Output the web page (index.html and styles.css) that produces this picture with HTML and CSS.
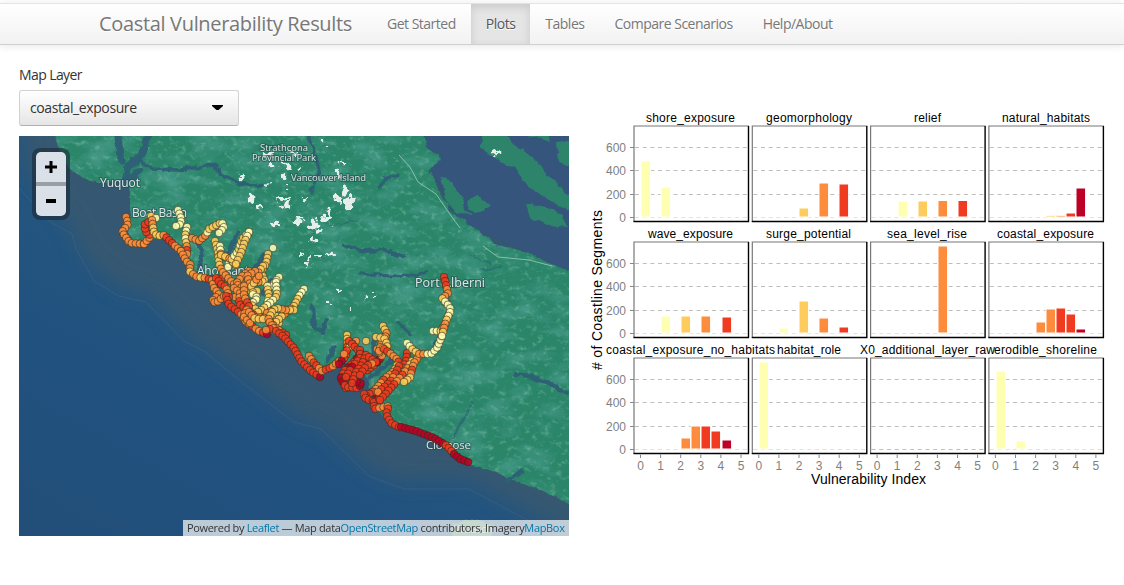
FILE: index.html
```html
<!DOCTYPE html>
<html lang="en">
<head>
<meta charset="utf-8">
<title>Coastal Vulnerability Results</title>
<link rel="stylesheet" href="styles.css">
</head>
<body>
<header class="navbar">
  <span class="brand">Coastal Vulnerability Results</span>
  <nav class="tabs">
    <a class="tab">Get Started</a>
    <a class="tab active">Plots</a>
    <a class="tab">Tables</a>
    <a class="tab">Compare Scenarios</a>
    <a class="tab">Help/About</a>
  </nav>
</header>
<main class="content">
  <section class="map-column">
    <label class="label">Map Layer</label>
    <div class="select"><span class="value">coastal_exposure</span>
      <svg width="12" height="6" viewBox="0 0 12 6"><path d="M0 0H11V1L6.500 5H4.500L0 1Z" fill="#000"/></svg>
    </div>
    <div class="map">
      <svg class="canvas" width="550" height="400" viewBox="0 0 550 400">
        <defs>
          <linearGradient id="sea" x1="0" y1="1" x2=".72" y2=".08">
            <stop offset="0" stop-color="#224e78"/><stop offset=".3" stop-color="#21517f"/><stop offset=".55" stop-color="#23557f"/><stop offset="1" stop-color="#2b577c"/>
          </linearGradient>
          <filter id="soft" x="-20%" y="-20%" width="140%" height="140%"><feGaussianBlur stdDeviation="10"/></filter>
          <filter id="edge" x="-5%" y="-5%" width="110%" height="110%"><feTurbulence type="fractalNoise" baseFrequency=".12" numOctaves="3" seed="4"/><feDisplacementMap in="SourceGraphic" scale="6" xChannelSelector="R" yChannelSelector="G"/><feGaussianBlur stdDeviation=".6"/></filter>
          <filter id="snowedge" x="-20%" y="-20%" width="140%" height="140%"><feTurbulence type="fractalNoise" baseFrequency=".16" numOctaves="2" seed="9"/><feDisplacementMap in="SourceGraphic" scale="13" xChannelSelector="R" yChannelSelector="G"/><feGaussianBlur stdDeviation=".5"/></filter>
          <filter id="dark" x="0" y="0" width="100%" height="100%"><feTurbulence type="fractalNoise" baseFrequency=".03 .06" numOctaves="5" seed="12"/><feColorMatrix values="0 0 0 0 .12  0 0 0 0 .42  0 0 0 0 .38  2.2 0 0 0 -.95"/></filter>
          <filter id="light" x="0" y="0" width="100%" height="100%"><feTurbulence type="fractalNoise" baseFrequency=".16 .2" numOctaves="3" seed="31"/><feColorMatrix values="0 0 0 0 .33  0 0 0 0 .66  0 0 0 0 .48  0 2.4 0 0 -1.3"/><feGaussianBlur stdDeviation=".4"/></filter>
          <clipPath id="landclip"><use href="#land"/></clipPath>
        </defs>
        <rect width="550" height="400" fill="url(#sea)"/>
        <path d="M0 -20L10 35 50 88 65 122 100 152 130 158 165 197 230 242 275 280 305 292 350 332 380 345 450 345 510 377 580 412V-20Z" fill="#37586f" opacity=".9" filter="url(#soft)"/>
        <path d="M390 -10H560V140L440 85Z" fill="#35557d"/>
        <path d="M0 52L30 85 53 98 57 113 75 145 100 160 127 166 165 205 185 215 225 248 275 286 302 293 350 340 385 353 450 353 510 385" fill="none" stroke="#5a7190" stroke-opacity=".3"/>
        <g filter="url(#edge)">
          <path id="land" d="M33 -8L40 14 50 32 65 43 80 47 100 43 111 50 111 80 106 92 115 105 130 105 146 101 162 117 170 136 200 148 201 160 220 174 245 197 268 200 280 222 301 238 318 225 345 237 355 262 370 288 400 298 430 311 450 328 480 337 495 345 520 353 560 373V138L532 128 508 117 475 108 462 97 442 83 431 75 422 58 411 33 422 23 408 10 402 -8Z" fill="#2b8569"/>
          <g fill="#2d846b">
            <path d="M422 40L433 47 442 60 446 74 454 79 440 78 428 69Z"/>
            <path d="M448 62L459 60 473 70 457 78 449 73Z"/>
            <path d="M464 -6H483L495 8 513 21 530 40 555 65V77L530 64 509 50 495 31 482 27 462 12Z"/>
            <path d="M508 69L530 71 543 80 549 91 530 89 513 84Z"/>
            <path d="M500 -4H528L531 7 520 3ZM538 7L556 3V32L540 26Z"/>
            <path d="M432 388L455 383 477 389 470 402H434Z" fill="#467f60"/>
          </g>
        </g>
        <g clip-path="url(#landclip)">
          <rect width="550" height="400" filter="url(#dark)" opacity=".55"/>
          <rect width="550" height="400" filter="url(#light)" opacity=".45"/>
        </g>
        <g filter="url(#edge)" fill="none" stroke="#2f6076" stroke-linecap="round" stroke-linejoin="round">
          <path d="M106 48L109 30 122 20 132 -4M103 25L98 -4" stroke-width="7"/>
          <path d="M122 26L135 33 160 34 195 29 204 39 218 47 242 50" stroke-width="3.500"/>
          <path d="M112 43L120 35" stroke-width="7"/>
          <path d="M288 -3L297 18 300 35 292 56" stroke-width="3"/>
          <path d="M361 51L365 43 380 38" stroke-width="3"/>
          <path d="M325 110L342 115 366 114 384 121" stroke-width="4"/>
          <path d="M340 137L370 140 394 139 407 136" stroke-width="3"/>
          <path d="M293 170L295 192 304 196 308 184M380 187L391 198" stroke-width="4"/>
          <path d="M512 241L530 247 548 257M497 238L514 241" stroke-width="4"/>
          <path d="M454 267L444 283 434 302" stroke-width="2" opacity=".7"/>
          <path d="M490 344L502 336" stroke-width="5"/>
          <path d="M180 137L183 116 179 107M209 118L219 97M232 138L244 120M244 156L253 145M315 212L309 224M356 224L354 205M350 242L377 222M426 143L430 170 424 195 413 216" stroke-width="5"/>
          <path d="M450 119L473 128M463 134L482 131M316 89L339 84" stroke-width="1.500" opacity=".6"/>
        </g>
        <path d="M380 19L391 31 399 46 417 58 430 77 441 92M464 110L479 121 510 124 533 130" fill="none" stroke="#a5d2bd" stroke-width="1" stroke-opacity=".75"/>
        <g id="snow" fill="#e5eee9" filter="url(#snowedge)"></g>
        <g class="places">
          <text x="81" y="51" font-size="12" textLength="40">Yuquot</text>
          <text x="113" y="81" font-size="12" textLength="55">Boat Basin</text>
          <text x="178" y="139" font-size="12" textLength="52">Ahousant</text>
          <text x="396" y="151" font-size="12.500" textLength="70">Port Alberni</text>
          <text x="407" y="313" font-size="11.500" textLength="45">Clo-oose</text>
          <text x="241" y="15" font-size="9.500" textLength="48">Strathcona</text>
          <text x="233" y="24.500" font-size="9.500" textLength="64">Provincial Park</text>
          <text x="272" y="45" font-size="9.500" textLength="75">Vancouver Island</text>
          <text x="435" y="397" font-size="11.500" textLength="39" opacity=".7">Waatch</text>
        </g>
        <g id="segments"></g>
      </svg>
      <div class="zoom"><a class="zoom-button"><svg width="12" height="12"><path d="M4.500 0H7.500V4.500H12V7.500H7.500V12H4.500V7.500H0V4.500H4.500Z"/></svg></a><a class="zoom-button"><svg width="12" height="12"><path d="M1 4H11V8H1Z"/></svg></a></div>
      <div class="attribution">Powered by <a>Leaflet</a> — Map data<a>OpenStreetMap</a> contributors, Imagery<a>MapBox</a></div>
    </div>
  </section>
  <svg id="plots" class="plots" width="530" height="390" viewBox="0 0 530 390"></svg>
</main>
<script src="app.js"></script>
</body>
</html>
```
FILE: styles.css
```css
body {
  margin: 0;
  background: #fff;
  color: #333;
  font-family: "Open Sans", "Noto Sans", sans-serif;
  font-size: 14px;
}
.navbar {
  display: flex;
  box-sizing: border-box;
  height: 42px;
  margin-top: 3px;
  padding-left: 99px;
  border-top: 1px solid #e4e4e4;
  border-bottom: 1px solid #d0d0d0;
  background: linear-gradient(#fff, #f2f2f2);
  box-shadow: 0 1px 8px rgba(0, 0, 0, .1);
  color: #777;
  line-height: 40px;
  text-shadow: 0 1px 0 #fff;
  white-space: nowrap;
}
.brand { width: 273px; font-size: 20px; letter-spacing: -.33px; }
.tabs { display: flex; letter-spacing: -.5px; }
.tab { padding: 0 15px; }
.active {
  background: #e5e5e5;
  box-shadow: inset 0 3px 8px rgba(0, 0, 0, .125);
  color: #555;
}
.content { display: flex; padding: 20px 0 0 19px; }
.map-column { width: 550px; }
.label { display: block; height: 25px; line-height: 20px; letter-spacing: -.6px; }
.select {
  display: flex;
  align-items: center;
  justify-content: space-between;
  box-sizing: border-box;
  width: 220px;
  height: 36px;
  padding: 0 14px 0 10px;
  border: 1px solid #d2d2d2;
  border-bottom-color: #b0b0b0;
  border-radius: 3px;
  background: linear-gradient(#fff, #e6e6e6);
  letter-spacing: -.4px;
}
.value { padding-bottom: 2px; }
.map { position: relative; height: 400px; margin-top: 10px; overflow: hidden; }
.canvas { display: block; }
.places text {
  fill: #dce9e6;
  font-family: "Open Sans", sans-serif;
  paint-order: stroke;
  stroke: rgba(40, 75, 80, .6);
  stroke-width: 2px;
}
.zoom {
  position: absolute;
  left: 13px;
  top: 12px;
  display: grid;
  gap: 4px;
  padding: 4px;
  border-radius: 8px;
  background: linear-gradient(#9a9fa5, #9a9fa5) 4px 30px / 30px 12px no-repeat, rgba(24, 40, 53, .58);
}
.zoom-button {
  display: grid;
  place-items: center;
  width: 30px;
  height: 30px;
  background: #d9e0e7;
}
.zoom-button:first-child { border-radius: 5px 5px 0 0; }
.zoom-button:last-child { border-radius: 0 0 5px 5px; }
.attribution {
  position: absolute;
  right: 0;
  bottom: 0;
  box-sizing: border-box;
  width: 386px;
  height: 16px;
  padding: 0 4px;
  background: rgba(255, 255, 255, .7);
  font-size: 11px;
  line-height: 16px;
  letter-spacing: -.33px;
  white-space: nowrap;
}
.attribution a { color: #0078a8; }
.plots {
  margin: 40px 0 0 16px;
  overflow: visible;
  font-family: "Liberation Sans", Arial, sans-serif;
}
.strip { font-size: 12px; fill: #000; }
.tick { font-size: 12px; fill: #7f7f7f; }
.axis-title { font-size: 14px; fill: #000; }
```
FILE: app.js
```js
const NS = 'http://www.w3.org/2000/svg';
function add(parent, tag, attrs, text) {
  const el = document.createElementNS(NS, tag);
  for (const key in attrs) el.setAttribute(key, attrs[key]);
  if (text !== undefined) el.textContent = text;
  parent.appendChild(el);
  return el;
}
const palette = { Y: '#ffffb2', G: '#fecc5c', O: '#fd8d3c', R: '#f03b20', D: '#bd0026' };

// Coastline segments: exposure classes spread along each path.
const chains = [
  ['Y', '254,112 254,112'],
  ['YYYY', '159,74 162,82 162,88 157,90'],
  ['OOO', '107,81 109,88 103,96 111,107 125,108'],
  ['OORRRO', '125,108 132,100 126,95 126,88 133,84'],
  ['GY', '132,80 137,82'],
  ['OGGGORROOO', '133,84 135,97 139,100 145,99 149,103 154,108 162,115'],
  ['YGYGORO', '168,91 166,100 168,112 168,118'],
  ['OOOYGGGYYY', '173,102 180,105 187,99 190,93 203,86 205,92 200,97'],
  ['OOOOGOGORRR', '162,115 167,125 172,129 170,135 178,141 187,142 193,144 202,143'],
  ['GGGGOOOO', '196,105 199,117 200,128 203,135 210,143 218,151'],
  ['YOGY', '201,110 202,119 211,123 209,131'],
  ['GOGG', '202,119 210,122 217,129'],
  ['GGYGYGYY', '217,129 212,124 219,115 223,103 230,96'],
  ['YGGGG', '230,96 226,105 222,117 217,128'],
  ['GGGGGOGGO', '249,118 247,128 242,136 246,145 233,147 225,158'],
  ['GOGOGO', '244,130 237,140 230,146 221,151'],
  ['OOOGO', '230,135 223,140 217,148 226,153 216,161'],
  ['OOGO', '236,135 228,140 232,151 240,140'],
  ['YYYGGYGOGG', '260,141 253,150 248,150 250,160 247,173 257,180 260,187'],
  ['YGYG', '257,146 258,160 252,166 242,174'],
  ['YYGGOOGG', '285,153 280,160 275,170 263,180 257,186'],
  ['GOGO', '275,174 266,174 258,172 248,177'],
  ['GYYYGG', '238,155 232,157 239,162 232,168 239,176'],
  ['OOOOO', '193,144 195,152 200,158 193,165 197,167 205,160'],
  ['RROR', '197,142 202,148 207,151 210,161'],
  ['RRRRROOOROORD', '207,160 210,169 217,174 222,178 227,186 240,195 248,198'],
  ['OORRROOOOR', '215,152 221,157 220,168 229,174 237,181 247,182 257,192 267,199'],
  ['OOROOO', '225,150 225,160 230,170 224,180 231,187'],
  ['OGGG', '230,176 235,182 240,183 244,183'],
  ['GOOORO', '253,176 249,184 255,192 247,194'],
  ['RRRRRRRRRD', '257,195 265,201 275,212 282,225 292,235 301,241'],
  ['OROROO', '290,220 295,227 303,235 313,231 320,225'],
  ['GORRRDD', '328,199 328,211 327,220 320,228'],
  ['OGRO', '337,205 332,209 325,218'],
  ['RRRDDRRDRRRRR', '330,205 342,217 335,226 325,235 322,243 327,252'],
  ['DRRDD', '322,242 327,251 338,252 343,248 334,244'],
  ['RRRRRRDDOOO', '331,240 337,233 347,235 357,228 363,220 358,213'],
  ['RRRDRR', '341,214 341,222 333,231 327,241'],
  ['RRRR', '347,219 343,228 337,236 333,247'],
  ['RRORRR', '350,221 357,226 347,230 341,239'],
  ['GOGOO', '364,190 368,198 363,206 360,215'],
  ['GGG', '357,201 365,202 369,210 364,212'],
  ['G', '347,205 347,205'],
  ['ROORGOOROORR', '365,213 372,218 380,225 375,235 365,243 355,255 347,260'],
  ['RRRDRDDR', '345,258 347,263 355,265 360,260'],
  ['RROORRRRRR', '355,266 355,273 370,270 367,278 372,287 380,291'],
  ['RRRORRRRROR', '388,217 387,225 381,236 375,247 365,255 360,263'],
  ['RRORRRO', '380,230 375,240 370,247 359,256'],
  ['GORORRRR', '393,225 388,233 378,245 370,254 361,264'],
  ['OOOROGGG', '400,220 395,227 392,237 391,242 385,246'],
  ['YGGOYYYYYY', '388,207 393,213 400,218 412,218 418,212 423,200'],
  ['YYGOOGYGOO', '414,195 422,195 427,186 430,178'],
  ['RRRROOOGGYYYYYYGGOOGGYY', '425,141 427,149 429,158 423,162 430,170 432,174 427,185 423,200'],
  ['DDDDDDDDDDRRDDDDD', '382,291 397,295 415,302 428,310 435,318 441,323 449,326']
];
const segments = document.getElementById('segments');
for (const [classes, path] of chains) {
  const points = path.split(' ').map(p => p.split(',').map(Number));
  const lengths = points.slice(1).map((p, i) => Math.hypot(p[0] - points[i][0], p[1] - points[i][1]));
  const total = lengths.reduce((a, b) => a + b, 0);
  const count = Math.max(1, Math.round(total / 4.100));
  for (let i = 0; i <= (total ? count : 0); i++) {
    let d = total * i / count;
    let k = 0;
    while (k < lengths.length - 1 && d > lengths[k]) d -= lengths[k++];
    const t = lengths[k] ? Math.min(1, d / lengths[k]) : 0;
    const cx = points[k][0] + t * (points[k + 1][0] - points[k][0]);
    const cy = points[k][1] + t * (points[k + 1][1] - points[k][1]);
    const c = classes[Math.min(classes.length - 1, Math.floor(i / (count + 1) * classes.length))];
    add(segments, 'circle', { cx, cy, r: 3.800, fill: palette[c], 'fill-opacity': .87, stroke: '#302a18', 'stroke-opacity': .75, 'stroke-width': .8 });
  }
}

// Snow fields: x, y, width, height.
const snow = [
  [220, 38, 6, 5], [229, 59, 6, 6], [248, 46, 5, 3], [263, 37, 5, 6], [258, 61, 14, 4], [263, 67, 9, 5], [237, 71, 7, 3],
  [252, 86, 8, 4], [273, 84, 9, 5], [264, 27, 6, 4], [320, 25, 6, 4], [317, 35, 5, 6], [322, 49, 6, 10], [314, 61, 9, 5],
  [326, 63, 8, 10], [331, 60, 5, 8], [307, 72, 4, 8], [304, 80, 9, 6], [292, 83, 6, 11], [297, 93, 6, 4], [291, 102, 9, 3],
  [278, 80, 8, 4], [284, 62, 5, 2], [280, 116, 5, 2], [288, 120, 4, 4], [307, 117, 7, 2], [278, 32, 4, 3], [305, 8, 4, 2],
  [318, 152, 4, 3], [345, 160, 4, 4], [330, 172, 3, 3], [354, 158, 3, 2], [245, 16, 9, 4], [272, 14, 5, 5], [250, 28, 5, 5],
  [288, 127, 3, 4], [310, 168, 3, 2], [297, 119, 3, 2], [266, 50, 5, 3], [474, 14, 5, 4]
];
const snowLayer = document.getElementById('snow');
for (const [x, y, w, h] of snow) add(snowLayer, 'ellipse', { cx: x + w / 2, cy: y + h / 2, rx: w / 2 + .3, ry: h / 2 + .3 });

// Histograms: bars are [left offset, height, class].
const panels = [
  ['shore_exposure', 61, 89, [[8, 55, 'Y'], [28, 29, 'Y']]],
  ['geomorphology', 181, 86, [[48, 8, 'G'], [68, 33, 'O'], [88, 32, 'R']]],
  ['relief', 329, 27, [[28, 15, 'Y'], [48, 15, 'G'], [68, 15.500, 'O'], [88, 15.500, 'R']]],
  ['natural_habitats', 417, 88, [[58, .7, 'G'], [68, .7, 'O'], [78, 3, 'R'], [88, 28, 'D']]],
  ['wave_exposure', 63, 85, [[28, 16, 'Y'], [48, 16, 'G'], [68, 16, 'O'], [89, 15, 'R']]],
  ['surge_potential', 181, 85, [[28, 4, 'Y'], [48, 31, 'G'], [68, 14, 'O'], [88, 5, 'R']]],
  ['sea_level_rise', 302, 80, [[68, 86, 'O']]],
  ['coastal_exposure', 412, 97, [[48, 10, 'O'], [58, 23, 'O'], [68, 24, 'R'], [78, 18, 'R'], [88, 3, 'D']]],
  ['coastal_exposure_no_habitats', 21, 169, [[48, 10, 'O'], [58, 22, 'O'], [68, 22, 'R'], [78, 17, 'R'], [89, 8, 'D']]],
  ['habitat_role', 192, 64, [[8, 86, 'Y']]],
  ['X0_additional_layer_raw', 275, 135, []],
  ['erodible_shoreline', 409, 103, [[8, 77, 'Y'], [28, 7, 'Y']]]
];
const plots = document.getElementById('plots');
const lefts = [49, 167.300, 285.600, 403.900];
const tops = [21, 137, 253];
panels.forEach(([name, tx, tw, bars], n) => {
  const col = n % 4, row = Math.floor(n / 4), x = lefts[col], y = tops[row];
  const base = y + 91;
  for (let v = 0; v < 4; v++) {
    const gy = Math.round(base - v * 23.500) + .5;
    add(plots, 'line', { x1: x + 1, x2: x + 114, y1: gy, y2: gy, stroke: v || n === 10 ? '#bebebe' : '#e2e2e2', 'stroke-dasharray': '4 3.700' });
    if (col === 0) {
      add(plots, 'line', { x1: x - 4, x2: x, y1: gy, y2: gy, stroke: '#888' });
      add(plots, 'text', { x: x - 8, y: gy + 4.500, 'text-anchor': 'end', class: 'tick' }, v * 200);
    }
  }
  for (const [bx, h, c] of bars) add(plots, 'rect', { x: Math.round(x + bx) - 1, y: base - h - 1, width: 9.600, height: h + 1, fill: palette[c], stroke: '#fff' });
  add(plots, 'path', { d: `M${x} ${y + 96}V${y}H${x + 115}`, fill: 'none', stroke: '#777', 'stroke-width': 1.200 });
  add(plots, 'path', { d: `M${x - .5} ${y + 95.500}H${x + 114.500}V${y}`, fill: 'none', stroke: '#000', 'stroke-width': 1.400 });
  add(plots, 'text', { x: tx, y: y - 4, textLength: tw, class: 'strip' }, name);
  if (row === 2) {
    for (let v = 0; v < 6; v++) {
      const cx = x + 6.500 + v * 20.100;
      add(plots, 'line', { x1: cx, x2: cx, y1: y + 96.500, y2: y + 100, stroke: '#888' });
      add(plots, 'text', { x: cx, y: y + 112, 'text-anchor': 'middle', class: 'tick' }, v);
    }
  }
});
add(plots, 'text', { x: 226, y: 379, textLength: 115, class: 'axis-title' }, 'Vulnerability Index');
add(plots, 'text', { x: 0, y: 0, textLength: 160, class: 'axis-title', transform: 'translate(17 265) rotate(-90)' }, '# of Coastline Segments');
```
